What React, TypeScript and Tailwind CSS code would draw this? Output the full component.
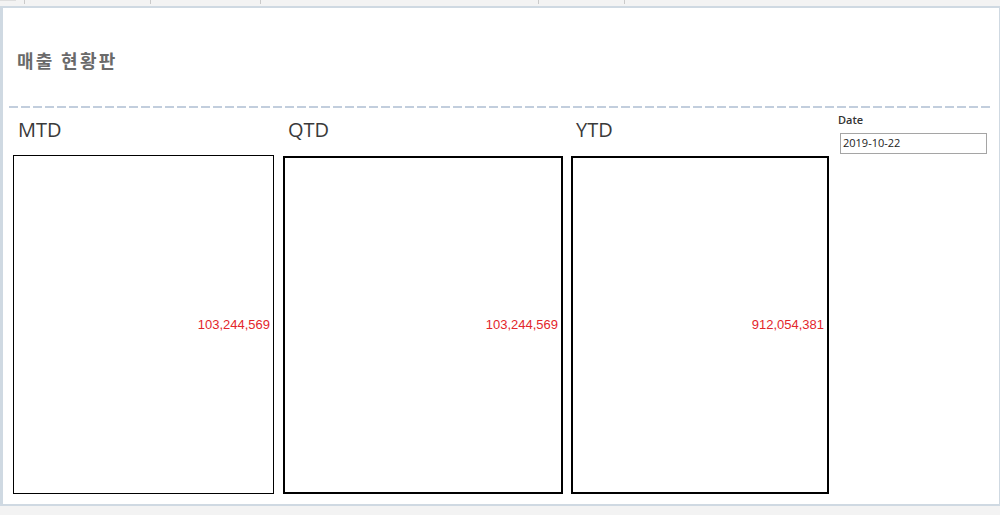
import React from "react";

const sans = { fontFamily: '"Open Sans", "Noto Sans", "Noto Sans CJK KR", sans-serif' };

function Metric({
  label,
  value,
  boxW,
  boxH,
  boxMt,
  thick,
}: {
  label: string;
  value: string;
  boxW: number;
  boxH: number;
  boxMt: number;
  thick: boolean;
}) {
  return (
    <div className="flex flex-col" style={{ width: boxW }}>
      <div className="pl-[5px] h-[28px] leading-[28px] text-[20px] text-[#3a3a3a]">{label}</div>
      <div
        className={`flex items-center justify-end pr-[3px] bg-white ${thick ? "border-2" : "border"} border-black`}
        style={{ height: boxH, marginTop: boxMt }}
      >
        <span
          className="text-[13px] text-[#e3262b]"
          style={{ fontFamily: '"Liberation Sans", Arial, sans-serif' }}
        >
          {value}
        </span>
      </div>
    </div>
  );
}

export default function App() {
  return (
    <div className="w-[1000px] h-[515px] bg-[#f3f3f3] flex flex-col overflow-hidden" style={sans}>
      {/* top ruler */}
      <div className="h-[6px] flex items-start">
        <div className="w-[16px] h-px bg-[#dedede]" />
        <div className="ml-[8px] w-px h-[4px] bg-[#cacaca]" />
        <div className="ml-[125px] w-px h-[4px] bg-[#cacaca]" />
        <div className="ml-[109px] w-px h-[4px] bg-[#cacaca]" />
        <div className="ml-[277px] w-px h-[4px] bg-[#cacaca]" />
        <div className="ml-[85px] w-px h-[4px] bg-[#cacaca]" />
      </div>

      {/* frame */}
      <div className="h-[500px] bg-white border-t-2 border-l-[3px] border-r border-b-2 border-[#cfd9e2] flex flex-col">
        <div className="h-[98px] pl-[14px] pt-[39px]">
          <div
            className="text-[18px] leading-[26px] font-bold text-[#6a6a6a] tracking-[2.3px]"
            style={{ fontFamily: '"Noto Sans CJK KR", "Noto Sans", sans-serif' }}
          >
            매출 현황판
          </div>
        </div>
        <div className="ml-[6px] mr-[9px] h-[2px] bg-[repeating-linear-gradient(to_right,#c2cedd_0_9px,transparent_9px_12px)]" />

        <div className="flex-1 flex pl-[10px] pt-[8px]">
          <Metric label="MTD" value="103,244,569" boxW={261} boxH={339} boxMt={11} thick={false} />
          <div className="w-[9px]" />
          <Metric label="QTD" value="103,244,569" boxW={280} boxH={338} boxMt={12} thick={true} />
          <div className="w-[8px]" />
          <Metric label="YTD" value="912,054,381" boxW={258} boxH={338} boxMt={12} thick={true} />
          <div className="w-[9px]" />
          <div className="flex flex-col">
            <div className="text-[11px] leading-[16px] font-semibold text-[#333] mt-[-4px]">Date</div>
            <div className="mt-[5px] ml-[2px] w-[147px] h-[21px] border border-[#a5a5a5] flex items-center pl-[2px]">
              <span className="text-[11px] text-[#222]">2019-10-22</span>
            </div>
          </div>
        </div>
      </div>
    </div>
  );
}
